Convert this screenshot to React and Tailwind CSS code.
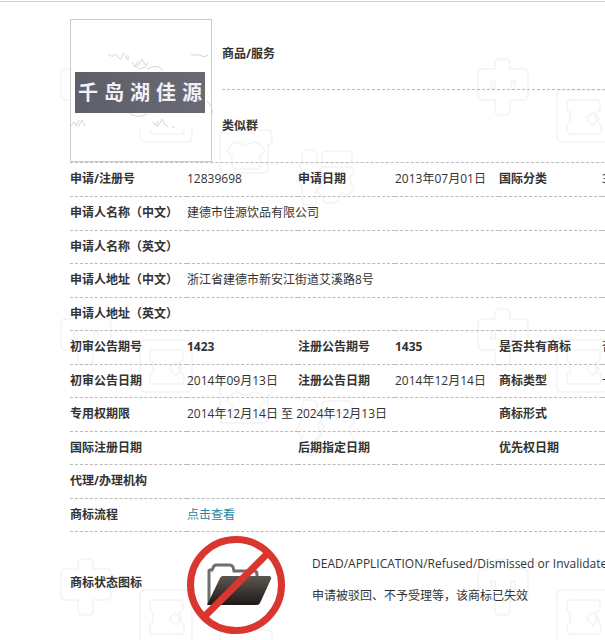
import React from 'react';

const rows = [
  [
    { label: '申请/注册号', value: '12839698' },
    { label: '申请日期', value: '2013年07月01日' },
    { label: '国际分类', value: '32' },
  ],
  [{ label: '申请人名称（中文）', value: '建德市佳源饮品有限公司' }],
  [{ label: '申请人名称（英文）', value: '' }],
  [{ label: '申请人地址（中文）', value: '浙江省建德市新安江街道艾溪路8号' }],
  [{ label: '申请人地址（英文）', value: '' }],
  [
    { label: '初审公告期号', value: '1423', bold: true },
    { label: '注册公告期号', value: '1435', bold: true },
    { label: '是否共有商标', value: '否' },
  ],
  [
    { label: '初审公告日期', value: '2014年09月13日' },
    { label: '注册公告日期', value: '2014年12月14日' },
    { label: '商标类型', value: '一般' },
  ],
  [
    { label: '专用权期限', value: '2014年12月14日 至 2024年12月13日', span: 3 },
    { label: '商标形式', value: '' },
  ],
  [
    { label: '国际注册日期', value: '' },
    { label: '后期指定日期', value: '' },
    { label: '优先权日期', value: '' },
  ],
  [{ label: '代理/办理机构', value: '' }],
  [{ label: '商标流程', value: '点击查看', link: true }],
];

const Watermark = () => (
  <svg className="absolute inset-0 -z-10 h-full w-full" aria-hidden="true">
    <defs>
      <pattern id="seal" x="60" y="56" width="417" height="250" patternUnits="userSpaceOnUse">
        <g fill="none" stroke="#f3f3f3" strokeWidth="1.5" strokeLinejoin="round">
          <path d="M18 11V6q0-5 5-5h5q5 0 5 5v5h13q5 0 5 5v21q0 5-5 5H33v10q0 5-5 5h-5q-5 0-5-5V42H6q-5 0-5-5V16q0-5 5-5z" />
          <path d="M14 23h4v8h-4zM34 23h4v8h-4z" />
          <rect x="80" y="32" width="52" height="52" rx="5" />
          <path d="M94 42h25q4 0 4 4v4q0 4-4 4v8l5 5v6q0 3-4 3H94q-4 0-4-4v-4q0-3 3-3V54q-3 0-3-3v-5q0-4 4-4z" />
          <path d="M110 59l6-4 6 6-6 6-5-4z" />
          <path d="M178 72q8-4 14 0h14q6 0 6 5v5q0 5-4 5v23q0 5-5 5h-38q-5 0-5-5V78q0-6 6-6z" />
          <path d="M167 93q5-9 11-9l7 4 8-4q7 0 12 9l-5 4v11q0 3-3 3h-22q-3 0-3-3V97z" />
          <path d="M242 98q0-6 6-6h3q6 0 6 6v7q6 0 5 6l-4 6 4 11-6 3v13q0 3-4 3h-5q-5 0-5-4v-15l-6-5 6-11q-5-6 1-7z" />
          <rect x="262" y="93" width="30" height="12" rx="4" />
          <path d="M263 109h27q5 0 4 6l-5 5 5 12-8 6-5-4q-1 11-10 11h-4q-4 0-4-6l-6-6 7-14q-6-8-1-10z" />
        </g>
      </pattern>
    </defs>
    <rect width="100%" height="100%" fill="url(#seal)" />
  </svg>
);

const MarkImage = () => (
  <div className="relative isolate flex h-[72px] w-full items-center bg-white px-1">
    {/* Scribbles of the scanned paper */}
    <svg viewBox="0 0 140 72" className="absolute inset-0 -z-10 h-full w-full overflow-visible" fill="none" stroke="#d6d6da">
      <path d="M37-3q5 4 6 1t4 2 4-1 4 1 2-2M120-3q4 2 6 1t5 1 6-1" />
      <path d="M61 5l3 5 3-6M65 11q3-4 6-9l4 7 2-4M67 12l8-2" />
      <path d="M76 12q12-6 16 2M58 56q8 6 18 1M136 44q5 4 6 12" />
      <path d="M0 69l3-4 2 4 3-6M7 70l4-7 3 6M82 65l3 4 2-5M86 70q3-3 5-8l3 6 3 1M101 70h3" />
    </svg>
    <div className="flex h-[41px] w-[130px] items-center justify-between bg-linear-to-r from-[#5f5f69] to-[#696973] px-[3px] text-[20px] leading-none font-bold text-[#f0f0f6]">
      <span>千</span>
      <span>岛</span>
      <span>湖</span>
      <span>佳</span>
      <span>源</span>
    </div>
  </div>
);

const InvalidIcon = () => (
  <svg viewBox="0 0 98 98" className="h-[98px] w-[98px] shrink-0" role="img" aria-label="无效">
    <defs>
      <linearGradient id="folder" x1="0" y1="0" x2="0" y2="1">
        <stop offset="0" stopColor="#5d5650" />
        <stop offset="1" stopColor="#1f1a17" />
      </linearGradient>
    </defs>
    <path
      d="M22 68V35q0-1 1-1h2l2-4q1-1 2-1h14q2 0 3 2l1 4h20q3 0 3 3v4"
      fill="#fff"
      stroke="#6e6e6e"
      strokeWidth="3"
    />
    <path d="M36 40h46q3 0 2 3L73 67q-1 2-3 2H20l13-27q1-2 3-2z" fill="url(#folder)" />
    <path d="M18 80L80 18" stroke="#d93630" strokeWidth="7" />
    <circle cx="49" cy="49" r="45.5" fill="none" stroke="#d93630" strokeWidth="7" />
  </svg>
);

const Value = ({ item }) => {
  if (item.link) {
    return (
      <a href="#flow" className="text-[#1b87a5]">
        {item.value}
      </a>
    );
  }
  return item.bold ? <b>{item.value}</b> : item.value;
};

const App = () => {
  return (
    <main className="relative isolate mt-px min-h-screen overflow-hidden border-t border-[#d0d4d4] bg-white pt-[17px] pl-[70px] font-['Open_Sans','Noto_Sans_CJK_SC',sans-serif] text-xs text-[#333]">
      <Watermark />
      <div className="min-w-[900px]">
        {/* Mark image and goods */}
        <section className="flex gap-[10px] border-b border-dashed border-[#bbb]">
          <div className="flex h-[143px] w-[142px] shrink-0 items-center border border-[#ccc] pt-1">
            <MarkImage />
          </div>
          <div className="flex grow flex-col font-bold">
            <h2 className="flex h-[71px] items-center border-b border-dashed border-[#bbb]">商品/服务</h2>
            <h2 className="flex grow items-center">类似群</h2>
          </div>
        </section>

        {/* Registration details */}
        <table className="w-full table-fixed border-collapse text-left">
          <colgroup>
            <col className="w-[117px]" />
            <col className="w-[111px]" />
            <col className="w-[97px]" />
            <col className="w-[104px]" />
            <col className="w-[103px]" />
            <col />
          </colgroup>
          <tbody>
            {rows.map((row, i) => (
              <tr key={i} className="h-[33px] border-b border-dashed border-[#bbb] even:h-[34px]">
                {row.map((item) => (
                  <React.Fragment key={item.label}>
                    <th scope="row" className="p-0 font-bold whitespace-nowrap">
                      {item.label}
                    </th>
                    <td colSpan={row.length === 1 ? 5 : item.span} className="p-0 whitespace-nowrap">
                      <Value item={item} />
                    </td>
                  </React.Fragment>
                ))}
              </tr>
            ))}
            <tr>
              <th scope="row" className="p-0 font-bold">
                商标状态图标
              </th>
              <td colSpan={5} className="p-0 pt-1">
                <div className="flex gap-[27px]">
                  <InvalidIcon />
                  <div className="pt-3 leading-8 whitespace-nowrap">
                    <p>DEAD/APPLICATION/Refused/Dismissed or Invalidated</p>
                    <p>申请被驳回、不予受理等，该商标已失效</p>
                  </div>
                </div>
              </td>
            </tr>
          </tbody>
        </table>
      </div>
    </main>
  );
};

export default App;
